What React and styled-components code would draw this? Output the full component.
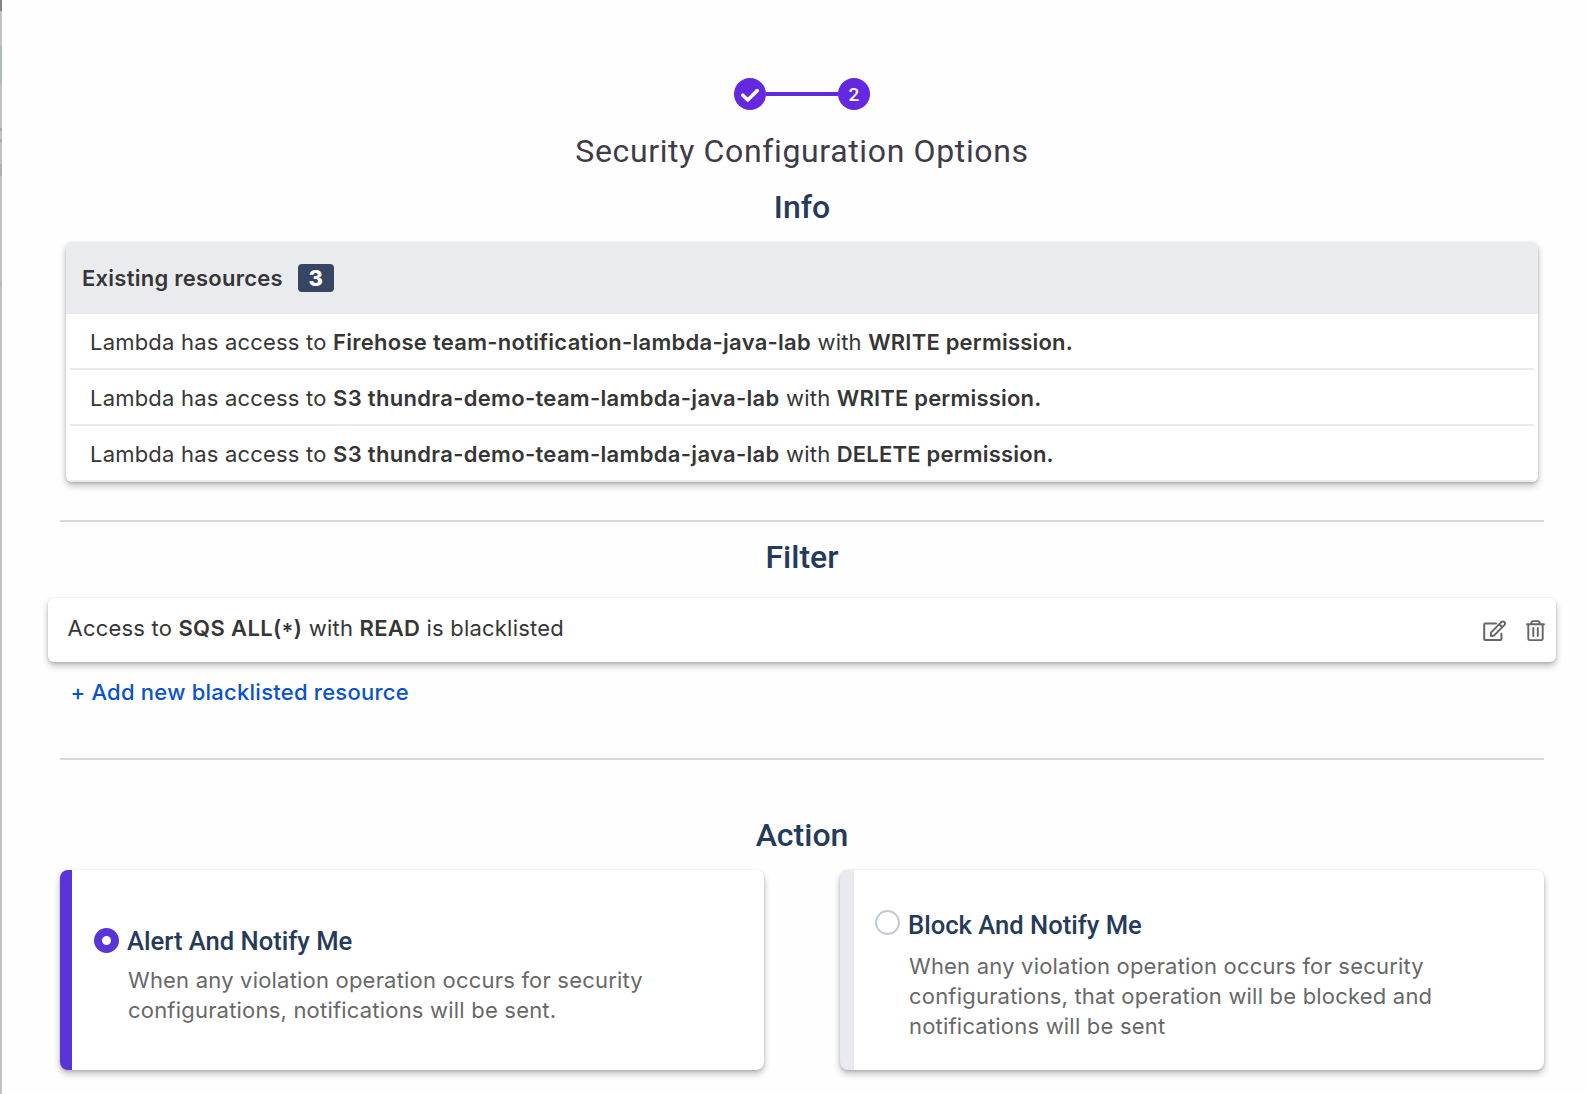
import React from "react";
import styled, { createGlobalStyle, css } from "styled-components";

const GlobalStyle = createGlobalStyle`
  * { box-sizing: border-box; }
  body { margin: 0; background: #fefefe; font-family: Inter, "Liberation Sans", sans-serif; }
`;

const raised = css`
  box-shadow: 0 4px 7px rgba(0, 0, 0, 0.24), 0 1px 3px rgba(0, 0, 0, 0.16);
`;

const Page = styled.div`
  display: flex;
  height: 1094px;
  overflow: hidden;
  background: #fefefe;
  color: #363636;
`;

const Backdrop = styled.div`
  flex: none;
  width: 2px;
  background: linear-gradient(
    #858585 11px, #c1c1c1 11px 46px, #afbcb9 46px 84px, #c1c1c1 84px 128px,
    #aaaaaa 128px 131px, #c1c1c1 131px 139px, #aaaaaa 139px 142px, #c1c1c1 142px 164px,
    #b0b0b0 164px 176px, #c1c1c1 176px 282px, #b8b8b8 282px 286px, #c1c1c1 286px
  );
`;

const Content = styled.main`
  flex: 1;
  display: flex;
  flex-direction: column;
  padding: 78px 42px 0 58px;
`;

const Stepper = styled.div`
  display: flex;
  align-items: center;
  justify-content: center;
`;

const Step = styled.div`
  display: flex;
  align-items: center;
  justify-content: center;
  width: 32px;
  height: 32px;
  border-radius: 50%;
  background: #6428e0;
  color: #fff;
  font: 500 19px/32px Roboto, sans-serif;
  padding-top: ${(p) => (p.$number ? "2px" : 0)};
`;

const StepLine = styled.div`
  width: 72px;
  height: 4px;
  background: #6428e0;
`;

const Title = styled.h1`
  margin: 22px 0 0;
  text-align: center;
  font: 400 32px/38px Roboto, sans-serif;
  letter-spacing: 0.64px;
  color: #413a49;
`;

const SectionTitle = styled.h2`
  margin: ${(p) => p.$top}px 0 0;
  text-align: center;
  font: 500 32px/38px Roboto, sans-serif;
  color: #263a59;
`;

const Panel = styled.section`
  margin: 16px 6px 0;
  border-radius: 6px;
  background: #fff;
  overflow: hidden;
  ${raised}
`;

const PanelHeader = styled.header`
  display: flex;
  align-items: center;
  gap: 15px;
  height: 72px;
  padding-left: 16px;
  background: #eaebef;
  font: 600 22px/28px Inter, sans-serif;
  letter-spacing: 0.25px;
`;

const Count = styled.span`
  width: 36px;
  height: 28px;
  border-radius: 4px;
  background: #364562;
  color: #fff;
  text-align: center;
  font-weight: 800;
  letter-spacing: 0;
`;

const Strong = styled.strong`
  font-weight: 600;
  letter-spacing: ${(p) => p.$spacing || 0.28}px;
`;

const Wildcard = styled.span`
  line-height: 0;
  vertical-align: -3px;
`;

const ResourceRow = styled.div`
  height: 56px;
  margin: 0 4px;
  padding: 14px 0 0 20px;
  border-bottom: 2px solid #e9eaee;
  font: 400 22px/28px Inter, sans-serif;
  letter-spacing: 0.2px;
`;

const Divider = styled.hr`
  width: 100%;
  height: 2px;
  margin: ${(p) => p.$top}px 0 0;
  border: 0;
  background: #d7d8d9;
`;

const FilterCard = styled.div`
  display: flex;
  justify-content: space-between;
  height: 64px;
  margin: 22px -12px 0;
  padding: 16px 11px 0 19.5px;
  border-radius: 6px;
  background: #fff;
  font: 400 22px/28px Inter, sans-serif;
  letter-spacing: 0.2px;
  ${raised}
`;

const Actions = styled.div`
  display: flex;
  gap: 19px;
  padding-top: 6px;
  color: #666;
`;

const AddLink = styled.a`
  align-self: flex-start;
  margin: 16px 0 0 10.4px;
  color: #0b53ce;
  font: 500 22px/28px Inter, sans-serif;
  letter-spacing: 0.24px;
`;

const Options = styled.div`
  display: grid;
  grid-template-columns: 704px 704px;
  justify-content: space-between;
  margin-top: 16px;
`;

const OptionCard = styled.div`
  display: flex;
  align-items: flex-start;
  gap: 8px;
  height: 200px;
  padding: ${(p) => (p.$selected ? "56px 0 0 22px" : "40px 0 0 21px")};
  border-left: ${(p) => (p.$selected ? "12px solid #5a34d8" : "14px solid #e9eaef")};
  border-radius: 8px;
  background: #fff;
  ${raised}
`;

const Radio = styled.span`
  flex: none;
  width: 25px;
  height: 25px;
  margin-top: ${(p) => (p.$selected ? 2 : 0)}px;
  border: ${(p) => (p.$selected ? "8.5px solid #5a34d8" : "2px solid #c3cad5")};
  border-radius: 50%;
  background: #fff;
`;

const OptionTitle = styled.h3`
  margin: 0;
  font: 500 25.6px/30px Roboto, sans-serif;
  color: #263a59;
`;

const OptionText = styled.p`
  width: 540px;
  margin: ${(p) => p.$top}px 0 0 1px;
  font: 400 22px/30px Inter, sans-serif;
  letter-spacing: 0.2px;
  color: #686868;
`;

const CheckIcon = () => (
  <svg width="32" height="32" viewBox="0 0 32 32" fill="none">
    <path d="M8.8 17.2 L13.7 22 L23.2 12.6" stroke="#fff" strokeWidth="3.6" strokeLinecap="round" strokeLinejoin="round" />
  </svg>
);

const EditIcon = () => (
  <svg width="24" height="22" viewBox="0 0 24 22" fill="none" stroke="currentColor" strokeWidth="2" strokeLinecap="round" strokeLinejoin="round">
    <path d="M13 3.4H2.2q-1 0-1 1V19q0 1 1 1h15.2q1 0 1-1v-5.2" />
    <path d="M7.9 15.8v-3.2L18.3 2.1q1.5-1.3 3 0t0 3L11.2 15.4Q9.8 16.2 7.9 15.8Z M16.4 4.2l2.9 2.9" />
  </svg>
);

const TrashIcon = () => (
  <svg width="19" height="22" viewBox="0 0 19 22" fill="none" stroke="currentColor" strokeWidth="1.9" strokeLinecap="round" strokeLinejoin="round">
    <path d="M1 4.2h17M5.4 4V2.9q0-1.8 1.8-1.8h4.6q1.8 0 1.8 1.8V4M2.3 4.4v14.4q0 1.3 1.3 1.3h11.8q1.3 0 1.3-1.3V4.4" />
    <path d="M7.3 8v8M11.8 8v8" />
  </svg>
);

const resources = [
  { name: "Firehose team-notification-lambda-java-lab", permission: "WRITE permission." },
  { name: "S3 thundra-demo-team-lambda-java-lab", permission: "WRITE permission.", spacing: 0.32 },
  { name: "S3 thundra-demo-team-lambda-java-lab", permission: "DELETE permission.", spacing: 0.32 },
];

export default function App() {
  return (
    <Page>
      <GlobalStyle />
      <Backdrop />
      <Content>
        <Stepper>
          <Step><CheckIcon /></Step>
          <StepLine />
          <Step $number>2</Step>
        </Stepper>
        <Title>Security Configuration Options</Title>

        <SectionTitle $top={18}>Info</SectionTitle>
        <Panel>
          <PanelHeader>
            Existing resources <Count>3</Count>
          </PanelHeader>
          {resources.map(({ name, permission, spacing }, i) => (
            <ResourceRow key={i}>
              Lambda has access to <Strong $spacing={spacing}>{name}</Strong> with{" "}
              <Strong $spacing={0.2}>{permission}</Strong>
            </ResourceRow>
          ))}
        </Panel>

        <Divider $top={38} />
        <SectionTitle $top={16}>Filter</SectionTitle>
        <FilterCard>
          <span>
            Access to <Strong $spacing={0.36}>SQS ALL(<Wildcard>*</Wildcard>)</Strong> with <Strong>READ</Strong> is blacklisted
          </span>
          <Actions>
            <EditIcon />
            <TrashIcon />
          </Actions>
        </FilterCard>
        <AddLink>+ Add new blacklisted resource</AddLink>

        <Divider $top={52} />
        <SectionTitle $top={56}>Action</SectionTitle>
        <Options>
          <OptionCard $selected>
            <Radio $selected />
            <div>
              <OptionTitle>Alert And Notify Me</OptionTitle>
              <OptionText $top={9}>
                When any violation operation occurs for security configurations, notifications will be sent.
              </OptionText>
            </div>
          </OptionCard>
          <OptionCard>
            <Radio />
            <div>
              <OptionTitle>Block And Notify Me</OptionTitle>
              <OptionText $top={11}>
                When any violation operation occurs for security configurations, that operation will be blocked and
                notifications will be sent
              </OptionText>
            </div>
          </OptionCard>
        </Options>
      </Content>
    </Page>
  );
}
